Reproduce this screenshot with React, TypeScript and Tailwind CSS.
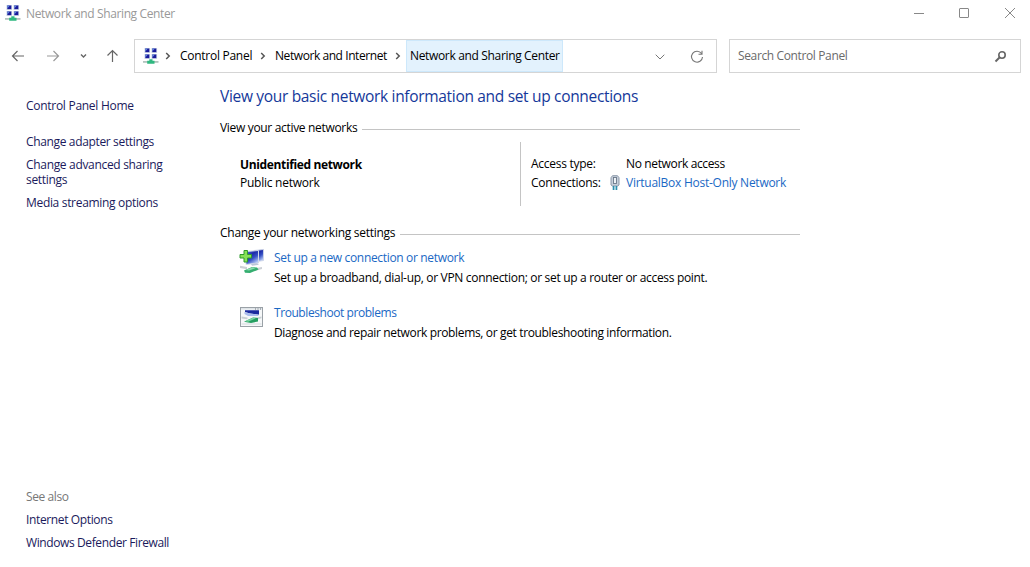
import React from "react";

function NetworkIcon() {
  return (
    <svg width="16" height="17" viewBox="0 0 16 17" className="shrink-0">
      {[[1.5, 0], [8.5, 0], [1.5, 6], [8.5, 6]].map(([x, y]) => (
        <g key={`${x}-${y}`}>
          <rect x={x} y={y} width="5.6" height="5" fill="#c9d3e4" />
          <rect x={x + 0.8} y={y + 0.5} width="4" height="3.6" fill="#1a1a9a" />
          <path d={`M${x + 0.8} ${y + 0.5}v3l2.6-3z`} fill="#6a8fdc" />
        </g>
      ))}
      <rect x="0" y="13" width="15.500" height="1.800" fill="#b4c4bf" />
      <path d="M6.300 11.300h3.200v1.500h2v3H4.200v-3h2.100z" fill="#2fb880" />
    </svg>
  );
}

function Crumb({ className = "" }: { className?: string }) {
  return (
    <svg width="6" height="8" viewBox="0 0 6 8" className={`shrink-0 ${className}`}>
      <path d="M1.200 1l3 3-3 3" fill="none" stroke="#555" strokeWidth="1.500" />
    </svg>
  );
}

function CableIcon() {
  return (
    <svg width="10" height="16" viewBox="0 0 10 16" className="shrink-0">
      <path d="M2.500 0.700h5l1.500 2v7.300l-1.500 1h-5L1 10V2.700z" fill="#c6cfda" stroke="#8d99aa" />
      <rect x="3.500" y="2.500" width="3" height="6" fill="#eef2f6" stroke="#6b7889" strokeWidth="0.900" />
      <path d="M3.500 11v4M6.500 11v4" stroke="#2f8fae" strokeWidth="1.600" />
      <path d="M5 11v4" stroke="#7cc0d3" strokeWidth="1" />
    </svg>
  );
}

function NewConnectionIcon() {
  return (
    <svg width="26" height="26" viewBox="0 0 26 26" className="shrink-0">
      <defs>
        <linearGradient id="screen" x1="0" y1="0" x2="0.6" y2="1">
          <stop offset="0" stopColor="#5d7be0" />
          <stop offset="0.4" stopColor="#1d2aa8" />
          <stop offset="0.65" stopColor="#3550c4" />
          <stop offset="1" stopColor="#b5c8f5" />
        </linearGradient>
      </defs>
      <path d="M15 1.500l9.500-1v11l-9.500 1.500z" fill="url(#screen)" stroke="#cdd5e6" strokeWidth="0.900" />
      <path d="M7 2.500l12.500-1v12.500L7 15.500z" fill="url(#screen)" stroke="#d3daea" strokeWidth="1" />
      <path d="M12 15l6-.8 2 1.600-7 1z" fill="#bcc6d8" />
      <path d="M1 16.800l7 1.200v2.200l-7-1.300z" fill="#ccd0d6" />
      <path d="M16 19.300l7-1.300v2l-8 2.300z" fill="#ccd0d6" />
      <path d="M5 21.500l8-3.500 5 .4 1.500 2.200L11 24l-5-.3z" fill="#35ae70" />
      <path d="M6.500 21l7-2.700 4 .4-7.500 2.700z" fill="#8ddcb0" />
      <path d="M5 1.500h3.500v4h4v3.500h-4v4H5v-4H1V5.500h4z" fill="#86e058" stroke="#2f9a2c" />
    </svg>
  );
}

function TroubleshootIcon() {
  return (
    <svg width="23" height="20" viewBox="0 0 23 20" className="shrink-0">
      <rect x="0.500" y="0.500" width="22" height="19" fill="#f6f8f9" stroke="#9aa1a7" />
      <path d="M1 1h21v1.500H1z" fill="#dfe4e8" />
      <path d="M15 2h1M17.500 2h1M20 2h1" stroke="#68727c" />
      <path d="M5 3.200h14v4.600L10 6.500 5 5z" fill="#1b2a9e" />
      <path d="M4.500 5L10 6.500l9 1.300-1 1.200H8L4.500 7z" fill="#a9bcec" />
      <path d="M1.500 9.500l6 1v1.800l-6-.8zM15 11l6.500-1.500v1.700L15 13z" fill="#c8cfd3" />
      <path d="M4 14.800l9-4.300 5 .6v3.400l-7 1.500z" fill="#249e60" />
      <path d="M5 14.300l8-3.500 3 .4-8 3.600z" fill="#7cd5a3" />
      <path d="M1.500 17h20" stroke="#d4dade" />
    </svg>
  );
}

function SectionTitle({ children }: { children: React.ReactNode }) {
  return (
    <div className="flex h-4 items-center">
      <h2 className="shrink-0 whitespace-nowrap">{children}</h2>
      <div className="mt-[3px] ml-[5px] h-px grow bg-[#c4c4c4]" />
    </div>
  );
}

export default function App() {
  return (
    <div className="flex h-[567px] w-[1030px] flex-col overflow-hidden bg-white font-['Open_Sans','Noto_Sans',sans-serif] text-[12px] leading-4 tracking-[-0.320px] text-black">
      <header className="flex h-[39px] items-start justify-between pl-[5px]">
        <div className="flex items-center gap-[5px] pt-[5px] text-[#999]">
          <NetworkIcon />
          <span className="tracking-[-0.370px]">Network and Sharing Center</span>
        </div>
        <div className="flex gap-[34px] pt-[7px] pr-[14px]">
          <svg width="12" height="12" viewBox="0 0 12 12"><path d="M2 6.500h10" stroke="#888" /></svg>
          <svg width="12" height="12" viewBox="0 0 12 12"><rect x="1.500" y="1.500" width="9" height="9" rx="0.500" fill="none" stroke="#888" /></svg>
          <svg width="12" height="12" viewBox="0 0 12 12"><path d="M1 1l10 10M11 1L1 11" stroke="#888" /></svg>
        </div>
      </header>

      <nav className="flex h-[34px] shrink-0 items-stretch">
        <div className="flex w-[134px] items-center pl-[11px]">
          <svg width="14" height="14" viewBox="0 0 14 14" fill="none" stroke="#666" strokeWidth="1.200"><path d="M13 7H1.500M6.500 2l-5 5 5 5" /></svg>
          <svg className="ml-[21px]" width="14" height="14" viewBox="0 0 14 14" fill="none" stroke="#999" strokeWidth="1.200"><path d="M1 7h11.500M7.500 2l5 5-5 5" /></svg>
          <svg className="ml-[19px]" width="8" height="6" viewBox="0 0 8 6" fill="none" stroke="#666" strokeWidth="1.400"><path d="M2 1.500L4.500 4 7 1.500" /></svg>
          <svg className="ml-[18px]" width="14" height="14" viewBox="0 0 14 14" fill="none" stroke="#666" strokeWidth="1.200"><path d="M7.500 13V1.500M2.500 6.500l5-5 5 5" /></svg>
        </div>
        <div className="flex w-[583px] items-center border border-[#d5d5d5] pl-[8px]">
          <NetworkIcon />
          <Crumb className="ml-[6px]" />
          <span className="ml-[9px] w-[72px] whitespace-nowrap tracking-[-0.270px]">Control Panel</span>
          <Crumb className="ml-[8px]" />
          <span className="ml-[9px] w-[112px] whitespace-nowrap tracking-[-0.430px]">Network and Internet</span>
          <Crumb className="ml-[8px]" />
          <span className="ml-[5px] flex h-full w-[157px] items-center border border-[#cde8fb] bg-[#e3f2fd] pl-[3px] whitespace-nowrap tracking-[-0.340px]">Network and Sharing Center</span>
          <svg className="mt-[2px] ml-[92px]" width="10" height="6" viewBox="0 0 10 6" fill="none" stroke="#777"><path d="M0.700 0.700L5 5 9.300.7" /></svg>
          <svg className="mt-[2px] ml-[25px]" width="14" height="14" viewBox="0 0 14 14" fill="none" stroke="#777" strokeWidth="1.100"><path d="M11.500 3.500A5.500 5.500 0 1 0 12.500 7M12 .8v3.400H8.500" /></svg>
        </div>
        <div className="ml-[12px] flex w-[292px] items-center justify-between border border-[#d5d5d5] pr-[13px] pl-[8px] text-[#6a6a6a]">
          <span className="tracking-[-0.370px]">Search Control Panel</span>
          <svg width="13" height="13" viewBox="0 0 13 13" fill="none" stroke="#666"><circle cx="8" cy="5" r="3.200" strokeWidth="1.600" /><path d="M5.500 7.500L1.500 11.500" strokeWidth="2" /></svg>
        </div>
      </nav>

      <div className="flex grow">
        <aside className="flex w-[220px] flex-col pt-[25px] pb-[16px] pl-[26px] text-[#1a1a5c]">
          <a className="tracking-[-0.280px]">Control Panel Home</a>
          <a className="mt-[20px] tracking-[-0.350px]">Change adapter settings</a>
          <a className="mt-[7px] leading-[15px]">Change advanced sharing<br />settings</a>
          <a className="mt-[8px]">Media streaming options</a>
          <span className="mt-auto text-[#777] tracking-[-0.400px]">See also</span>
          <a className="mt-[7px] tracking-[-0.370px]">Internet Options</a>
          <a className="mt-[7px] tracking-[-0.390px]">Windows Defender Firewall</a>
        </aside>

        <main className="w-[580px] pt-[13px]">
          <h1 className="text-[15.5px] leading-5 whitespace-nowrap text-[#14389a]">View your basic network information and set up connections</h1>
          <div className="mt-[14px]"><SectionTitle>View your active networks</SectionTitle></div>
          <div className="mt-[6px] flex h-[64px]">
            <div className="w-[300px] pt-[15px] pl-[20px]">
              <p className="font-bold tracking-[-0.360px]">Unidentified network</p>
              <p className="mt-[2px] tracking-[-0.250px]">Public network</p>
            </div>
            <div className="flex grow flex-col gap-[3px] border-l border-[#c4c4c4] pt-[14px] pl-[10px] whitespace-nowrap">
              <div className="flex"><span className="w-[95px] tracking-[-0.270px]">Access type:</span><span className="tracking-[-0.360px]">No network access</span></div>
              <div className="flex items-center"><span className="w-[79px] tracking-[-0.250px]">Connections:</span><CableIcon /><a className="ml-[6px] tracking-[-0.260px] text-[#1a68c4]">VirtualBox Host-Only Network</a></div>
            </div>
          </div>
          <div className="mt-[19px] tracking-[-0.270px]"><SectionTitle>Change your networking settings</SectionTitle></div>
          <div className="mt-[8px] flex gap-[9px] pl-[19px] whitespace-nowrap">
            <NewConnectionIcon />
            <div className="pt-px">
              <a className="block text-[#1a68c4] tracking-[-0.330px]">Set up a new connection or network</a>
              <p className="mt-[4px]">Set up a broadband, dial-up, or VPN connection; or set up a router or access point.</p>
            </div>
          </div>
          <div className="mt-[19px] flex gap-[11px] pl-[20px] whitespace-nowrap">
            <div className="pt-[2px]"><TroubleshootIcon /></div>
            <div>
              <a className="block text-[#1a68c4] tracking-[-0.430px]">Troubleshoot problems</a>
              <p className="mt-[4px] tracking-[-0.350px]">Diagnose and repair network problems, or get troubleshooting information.</p>
            </div>
          </div>
        </main>
      </div>
    </div>
  );
}
